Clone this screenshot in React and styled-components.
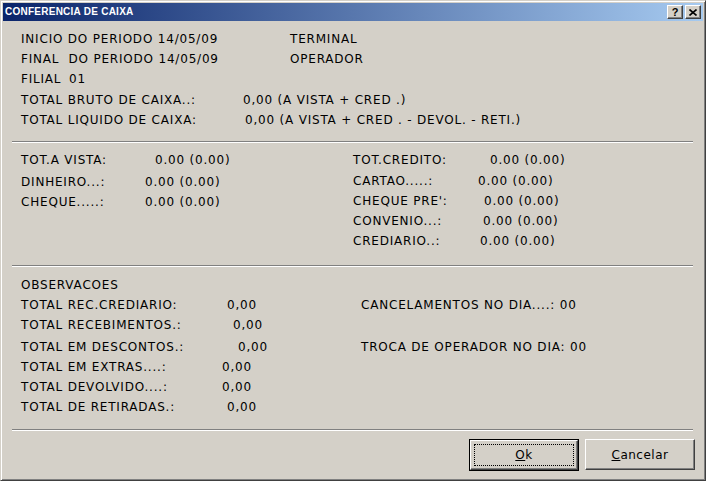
import React from "react";
import styled, { createGlobalStyle } from "styled-components";

const Global = createGlobalStyle`
  html, body { margin: 0; padding: 0; background: #d4d0c8; }
  body { font-family: "DejaVu Sans", Verdana, sans-serif; }
`;

const Window = styled.div`
  width: 706px;
  height: 481px;
  box-sizing: border-box;
  background: #d4d0c8;
  border: 1px solid;
  border-color: #d4d0c8 #404040 #404040 #d4d0c8;
  box-shadow: inset 1px 1px #ffffff, inset -1px -1px #808080;
  padding: 2px;
  display: flex;
  flex-direction: column;
`;

const TitleBar = styled.div`
  height: 18px;
  flex: none;
  display: flex;
  align-items: center;
  padding: 0 2px 0 2px;
  background: linear-gradient(to right, #0a246a, #a6caf0);
`;

const Title = styled.span`
  flex: 1;
  color: #ffffff;
  font-family: "Liberation Sans", Arial, sans-serif;
  font-weight: bold;
  font-size: 10px;
  letter-spacing: 0.25px;
  line-height: 18px;
`;

const CaptionButton = styled.div`
  width: 16px;
  height: 14px;
  box-sizing: border-box;
  margin-left: 2px;
  background: #d4d0c8;
  border: 1px solid;
  border-color: #ffffff #404040 #404040 #ffffff;
  box-shadow: inset -1px -1px #808080;
  display: flex;
  align-items: center;
  justify-content: center;
  font-family: "Liberation Sans", Arial, sans-serif;
  font-weight: bold;
  font-size: 11px;
  line-height: 12px;
  color: #000;
`;

const Body = styled.div`
  flex: 1;
  display: flex;
  flex-direction: column;
  padding: 8px 8px 0 9px;
  color: #000;
  font-family: "DejaVu Sans", Verdana, sans-serif;
  font-size: 12px;
  letter-spacing: 0.8px;
`;

const Section = styled.div`
  padding-left: 9px;
  display: ${(p) => (p.$columns ? "flex" : "block")};
`;

const Column = styled.div`
  flex: none;
  width: ${(p) => (p.$w ? `${p.$w}px` : "auto")};
  padding-top: ${(p) => p.$top || 0}px;
  display: flex;
  flex-direction: column;
`;

const Row = styled.div`
  display: flex;
  height: 20px;
  line-height: 20px;
  white-space: pre;
  margin-top: ${(p) => p.$shift || 0}px;
`;

const Label = styled.span`
  flex: none;
  width: ${(p) => (p.$w ? `${p.$w}px` : "auto")};
`;

const Value = styled.span``;

const Separator = styled.div`
  height: 0;
  border-top: 1px solid #808080;
  border-bottom: 1px solid #ffffff;
  margin: ${(p) => p.$top}px 2px ${(p) => p.$bottom}px 0;
`;

const ButtonRow = styled.div`
  display: flex;
  justify-content: flex-end;
  gap: 6px;
`;

const Button = styled.button`
  width: 110px;
  height: ${(p) => (p.$default ? 32 : 31)}px;
  box-sizing: border-box;
  padding: 0;
  background: #d4d0c8;
  border: ${(p) => (p.$default ? "1px solid #000" : "none")};
  font-family: "DejaVu Sans", Verdana, sans-serif;
  font-size: 12px;
  letter-spacing: 0.5px;
  color: #000;
  display: flex;
`;

const ButtonFace = styled.span`
  flex: 1;
  display: flex;
  align-items: center;
  justify-content: center;
  border: 1px solid;
  border-color: #ffffff #404040 #404040 #ffffff;
  box-shadow: inset -1px -1px #808080;
  position: relative;
`;

const FocusRing = styled.span`
  position: absolute;
  inset: 3px;
  border: 1px dotted #000;
`;

const U = styled.span`
  text-decoration: underline;
`;

function Field({ w, label, value, shift }) {
  return (
    <Row $shift={shift}>
      <Label $w={w}>{label}</Label>
      {value !== undefined && <Value>{value}</Value>}
    </Row>
  );
}

export default function App() {
  return (
    <>
      <Global />
      <Window>
        <TitleBar>
          <Title>CONFERENCIA DE CAIXA</Title>
          <CaptionButton>?</CaptionButton>
          <CaptionButton>
            <svg width="8" height="7" viewBox="0 0 8 7">
              <path d="M0.5 0.5 L7.5 6.5 M7.5 0.5 L0.5 6.5" stroke="#000" strokeWidth="1.6" />
            </svg>
          </CaptionButton>
        </TitleBar>
        <Body>
          <Section>
            <Field w={269} label="INICIO DO PERIODO 14/05/09" value="TERMINAL" />
            <Field w={269} label="FINAL  DO PERIODO 14/05/09" value="OPERADOR" />
            <Field w={48} label="FILIAL" value="01" />
            <Field w={222} label="TOTAL BRUTO DE CAIXA..:" value="0,00 (A VISTA + CRED .)" shift={1} />
            <Field w={224} label="TOTAL LIQUIDO DE CAIXA:" value="0,00 (A VISTA + CRED . - DEVOL. - RETI.)" />
          </Section>

          <Separator $top={11} $bottom={7} />

          <Section $columns>
            <Column $w={332}>
              <Field w={134} label="TOT.A VISTA:" value="0.00 (0.00)" />
              <Field w={124} label="DINHEIRO...:" value="0.00 (0.00)" shift={2} />
              <Field w={124} label="CHEQUE.....:" value="0.00 (0.00)" />
            </Column>
            <Column>
              <Field w={137} label="TOT.CREDITO:" value="0.00 (0.00)" />
              <Field w={125} label="CARTAO.....:" value="0.00 (0.00)" shift={1} />
              <Field w={131} label="CHEQUE PRE':" value="0.00 (0.00)" />
              <Field w={130} label="CONVENIO...:" value="0.00 (0.00)" />
              <Field w={127} label="CREDIARIO..:" value="0.00 (0.00)" />
            </Column>
          </Section>

          <Separator $top={14} $bottom={8} />

          <Section $columns>
            <Column $w={340}>
              <Field label="OBSERVACOES" />
              <Field w={206} label="TOTAL REC.CREDIARIO:" value="0,00" />
              <Field w={212} label="TOTAL RECEBIMENTOS.:" value="0,00" />
              <Field w={217} label="TOTAL EM DESCONTOS.:" value="0,00" shift={2} />
              <Field w={201} label="TOTAL EM EXTRAS....:" value="0,00" />
              <Field w={201} label="TOTAL DEVOLVIDO....:" value="0,00" />
              <Field w={206} label="TOTAL DE RETIRADAS.:" value="0,00" />
            </Column>
            <Column $top={20}>
              <Field label="CANCELAMENTOS NO DIA....: 00" />
              <Field label="TROCA DE OPERADOR NO DIA: 00" shift={22} />
            </Column>
          </Section>

          <Separator $top={12} $bottom={8} />

          <ButtonRow>
            <Button $default>
              <ButtonFace>
                <FocusRing />
                <span>
                  <U>O</U>k
                </span>
              </ButtonFace>
            </Button>
            <Button>
              <ButtonFace>
                <span>
                  <U>C</U>ancelar
                </span>
              </ButtonFace>
            </Button>
          </ButtonRow>
        </Body>
      </Window>
    </>
  );
}
